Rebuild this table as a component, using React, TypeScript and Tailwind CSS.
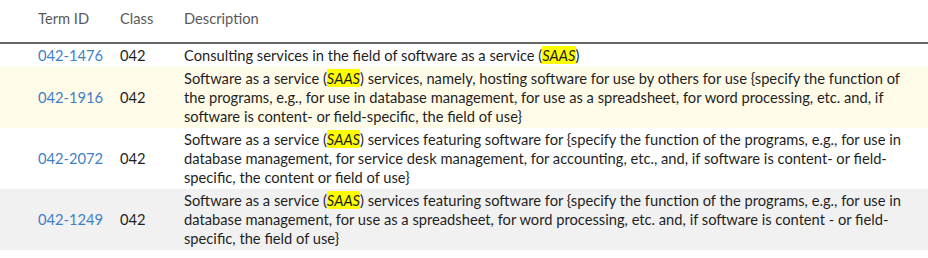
import React from 'react';

type Row = { id: string; cls: string; lines: React.ReactNode[]; bg: string };

const Saas = () => <em className="bg-[#ffff00] italic">SAAS</em>;

const rows: Row[] = [
  {
    id: '042-1476',
    cls: '042',
    bg: 'bg-white',
    lines: [<>Consulting services in the field of software as a service (<Saas />)</>],
  },
  {
    id: '042-1916',
    cls: '042',
    bg: 'bg-[#fffbe9]',
    lines: [
      <>Software as a service (<Saas />) services, namely, hosting software for use by others for use {'{'}specify the function of</>,
      <>the programs, e.g., for use in database management, for use as a spreadsheet, for word processing, etc. and, if</>,
      <>software is content- or field-specific, the field of use{'}'}</>,
    ],
  },
  {
    id: '042-2072',
    cls: '042',
    bg: 'bg-white',
    lines: [
      <>Software as a service (<Saas />) services featuring software for {'{'}specify the function of the programs, e.g., for use in</>,
      <>database management, for service desk management, for accounting, etc., and, if software is content- or field-</>,
      <>specific, the content or field of use{'}'}</>,
    ],
  },
  {
    id: '042-1249',
    cls: '042',
    bg: 'bg-[#f1f1f1]',
    lines: [
      <>Software as a service (<Saas />) services featuring software for {'{'}specify the function of the programs, e.g., for use in</>,
      <>database management, for use as a spreadsheet, for word processing, etc. and, if software is content - or field-</>,
      <>specific, the field of use{'}'}</>,
    ],
  },
];

export default function App() {
  return (
    <div className="w-[928px] h-[258px] bg-white font-['Lato',sans-serif] text-[14.7px] leading-[19px] text-[#1f1f1f]">
      <div className="flex h-[44px] pt-[9px] text-[#5a5a5a] border-b-2 border-[#666666]">
        <div className="w-[120px] pl-[38px]">Term ID</div>
        <div className="w-[64px]">Class</div>
        <div className="flex-1">Description</div>
      </div>
      {rows.map((r) => (
        <div key={r.id} className={`flex items-center py-[2px] ${r.bg}`}>
          <div className="w-[120px] pl-[38px] text-[#3f7fc7]">{r.id}</div>
          <div className="w-[64px]">{r.cls}</div>
          <div className="flex-1 whitespace-nowrap">
            {r.lines.map((l, i) => (
              <div key={i}>{l}</div>
            ))}
          </div>
        </div>
      ))}
    </div>
  );
}
